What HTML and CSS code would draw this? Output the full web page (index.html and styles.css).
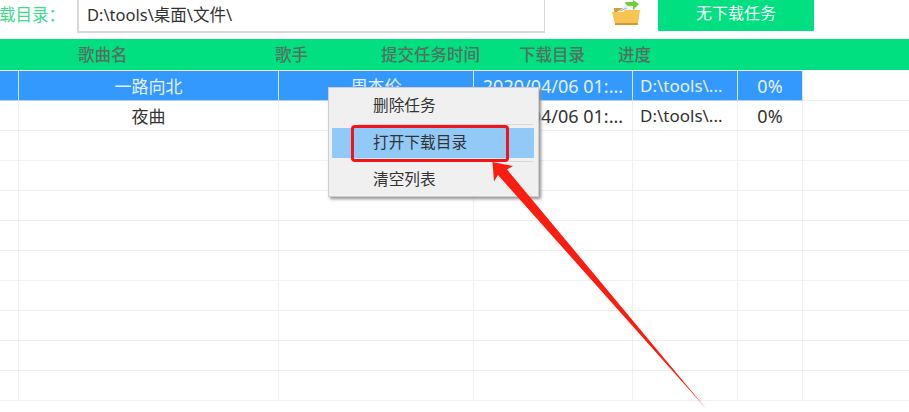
FILE: index.html
```html
<!DOCTYPE html>
<html lang="zh-CN">
<head>
  <meta charset="UTF-8" />
  <title>下载任务</title>
  <link rel="stylesheet" href="styles.css">
</head>
<body>
  <div class="toolbar">
    <div class="dir-label"><span>载目录：</span></div>
    <div class="dir-input">D:\tools\桌面\文件\</div>
    <svg class="folder-icon" width="30" height="26" viewBox="0 0 30 26">
      <path d="M3 8h9l2 2h13v14H4z" fill="#d99a2b"/>
      <path d="M6 12l11-7 6 4v7H7z" fill="#f4f6f4" stroke="#c9d2d6" stroke-width="0.6"/>
      <path d="M9 11l7-3M11 13l7-3" stroke="#9fb3bd" stroke-width="1"/>
      <path d="M14 2h8V0l6 4-6 6V6h-4c-2 0-4-2-4-4z" fill="#6fce3a"/>
      <path d="M1 12h11l2-2h15l-2 14H4z" fill="#f6c553"/>
      <path d="M4 23h23l-.2 2H4z" fill="#d9982b"/>
    </svg>
    <div class="task-btn">无下载任务</div>
  </div>

  <div class="list-head">
    <span>歌曲名</span>
    <span>歌手</span>
    <span>提交任务时间</span>
    <span>下载目录</span>
    <span>进度</span>
  </div>

  <table class="task-table">
    <colgroup>
      <col class="c-mark"><col class="c-song"><col class="c-singer"><col class="c-time"><col class="c-dir"><col class="c-pct"><col>
    </colgroup>
    <tbody>
      <tr class="selected"><td></td><td>一路向北</td><td>周杰伦</td><td class="num">2020/04/06 01:...</td><td class="left">D:\tools\...</td><td class="num">0%</td><td class="blank"></td></tr>
      <tr><td></td><td>夜曲</td><td>周杰伦</td><td class="num">2020/04/06 01:...</td><td class="left">D:\tools\...</td><td class="num">0%</td><td></td></tr>
      <tr><td></td><td></td><td></td><td></td><td></td><td></td><td></td></tr>
      <tr><td></td><td></td><td></td><td></td><td></td><td></td><td></td></tr>
      <tr><td></td><td></td><td></td><td></td><td></td><td></td><td></td></tr>
      <tr><td></td><td></td><td></td><td></td><td></td><td></td><td></td></tr>
      <tr><td></td><td></td><td></td><td></td><td></td><td></td><td></td></tr>
      <tr><td></td><td></td><td></td><td></td><td></td><td></td><td></td></tr>
      <tr><td></td><td></td><td></td><td></td><td></td><td></td><td></td></tr>
      <tr><td></td><td></td><td></td><td></td><td></td><td></td><td></td></tr>
      <tr><td></td><td></td><td></td><td></td><td></td><td></td><td></td></tr>
    </tbody>
  </table>

  <div class="context-menu">
    <div class="menu-item">删除任务</div>
    <div class="menu-sep"></div>
    <div class="menu-item active">打开下载目录</div>
    <div class="menu-sep"></div>
    <div class="menu-item">清空列表</div>
  </div>

  <div class="mark-box"></div>

  <svg class="mark-arrow" width="909" height="412" viewBox="0 0 909 412">
    <path d="M492.500 162 L513 166 L507 169.500 L706 408.500 L498 175 L494 181.500 Z" fill="#fb1d10"/>
  </svg>
</body>
</html>
```

FILE: styles.css
```css
html, body { height: 100%; }
body {
  margin: 0;
  background: #fff;
  font-family: "Noto Sans", "Noto Sans CJK SC", sans-serif;
  font-size: 16.500px;
  color: #333;
  overflow: hidden;
  position: relative;
}

.toolbar {
  display: flex;
  align-items: flex-start;
  height: 33px;
}

.dir-label {
  display: flex;
  justify-content: flex-end;
  width: 65px;
  height: 30px;
  line-height: 29px;
  white-space: nowrap;
  color: #3ddc8c;
  overflow: hidden;
}

.dir-input {
  box-sizing: border-box;
  width: 468px;
  height: 33px;
  margin-left: 12px;
  padding-left: 8px;
  line-height: 29px;
  background: #fff;
  border: 1px solid #d8d8d8;
  border-width: 0 1.500px 2px 2px;
  color: #333;
}

.folder-icon {
  margin-left: 66px;
}

.task-btn {
  width: 156px;
  height: 31px;
  margin-left: 17px;
  line-height: 26px;
  font-size: 16px;
  text-align: center;
  background: #00e080;
  color: #f4fff9;
}

.list-head {
  display: grid;
  grid-template-columns: 197px 106px 138px 99px auto;
  height: 31px;
  margin-top: 6px;
  padding-left: 78px;
  line-height: 31px;
  background: #00e080;
  color: #557060;
  font-weight: 500;
}

.task-table {
  table-layout: fixed;
  width: 100%;
  margin-top: 1px;
  border-collapse: separate;
  border-spacing: 0;
  font-size: 17px;
}

.c-mark { width: 19px; }
.c-song { width: 260px; }
.c-singer { width: 195px; }
.c-time { width: 159px; }
.c-dir { width: 105px; }
.c-pct { width: 65px; }

.task-table td {
  box-sizing: border-box;
  height: 30px;
  padding: 0;
  text-align: center;
  white-space: nowrap;
  overflow: hidden;
  border-right: 1px solid #efefef;
  border-bottom: 1px solid #efefef;
}

.task-table td:last-child { border-right: none; }
.task-table td.left { text-align: left; padding-left: 7px; }
.task-table td.num { font-size: 18px; }

.selected td {
  background: #3399ff;
  color: #e4f1ff;
  border-right-color: #d5e9ff;
  border-bottom-color: #a8d3ff;
}

.selected td.blank {
  background: #fff;
  border-bottom-color: #efefef;
}

.context-menu {
  position: absolute;
  left: 328px;
  top: 87px;
  box-sizing: border-box;
  width: 211px;
  height: 110px;
  padding: 3px;
  background: #f0f0f0;
  border: 1px solid #cfcfcf;
  box-shadow: 2px 2px 3px #8f8f8f;
  font-size: 15.700px;
  color: #333;
}

.menu-item {
  height: 30px;
  padding-left: 41px;
  line-height: 28px;
}

.menu-item.active {
  background: #91c9f7;
  margin-right: 1px;
}

.menu-sep {
  height: 1px;
  margin: 3px 2px 3px 26px;
  background: #d7d7d7;
}

.mark-box {
  position: absolute;
  left: 351px;
  top: 125px;
  box-sizing: border-box;
  width: 158px;
  height: 37px;
  border: 3px solid #f3131a;
  border-radius: 4px;
}

.mark-arrow {
  position: absolute;
  left: 0;
  top: 0;
}
```
